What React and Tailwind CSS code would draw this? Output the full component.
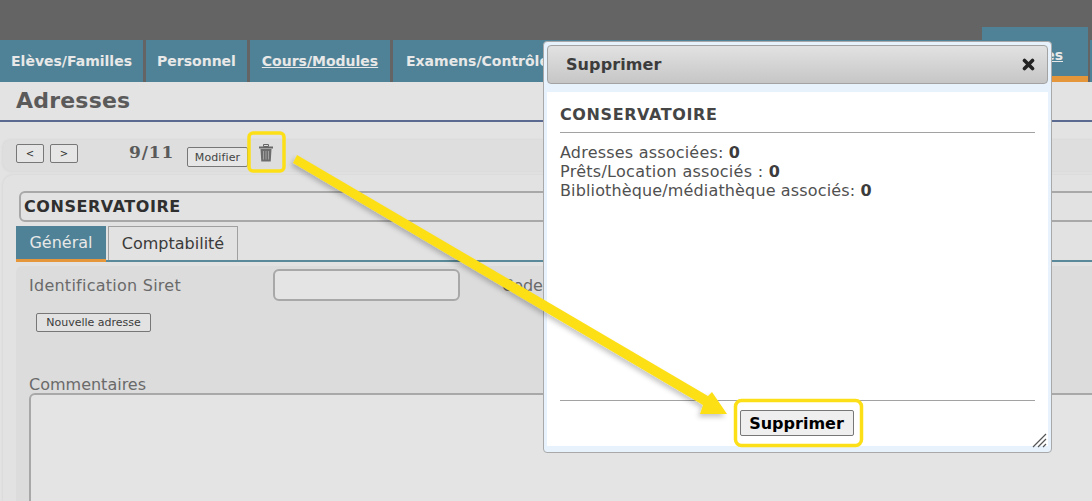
import React from "react";

const F = { fontFamily: '"DejaVu Sans", Verdana, sans-serif' };

function Tab({ children, w, u }) {
  return (
    <div className={`h-[42px] ${w} shrink-0 bg-[#4f8296] flex items-center justify-center text-[14px] font-bold text-[#e8e8e8] ${u ? "underline" : ""}`}>
      {children}
    </div>
  );
}

export default function App() {
  return (
    <div style={F} className="relative w-[1092px] h-[501px] overflow-hidden bg-[#e3e3e3] text-[#5f5f5f]">
      <div className="h-[40px] bg-[#636463]" />
      <div className="h-[42px] flex bg-[#636463] overflow-hidden">
        <Tab w="w-[143px] mr-[3px]">Elèves/Familles</Tab>
        <Tab w="w-[101px] mr-[3px]">Personnel</Tab>
        <Tab w="w-[140px] mr-[3px]" u>Cours/Modules</Tab>
        <div className="h-[42px] w-[170px] shrink-0 bg-[#4f8296] flex items-center pl-[13px] text-[14px] font-bold text-[#e8e8e8] whitespace-nowrap overflow-hidden">Examens/Contrôles</div>
        <div className="grow bg-[#4f8296]" />
      </div>
      <div className="h-[40px] border-b-2 border-[#5a6a90] pl-[16px] pt-[4px] text-[22px] leading-[30px] font-bold text-[#5a5a5a] tracking-[0.2px]">Adresses</div>
      <div className="ml-[3px] mt-[18px] h-[31px] rounded-l-[8px] bg-[#dedede] shadow-[0_0_3px_#cfcfcf] flex items-start pl-[13px] pt-[4px]">
        <button className="w-[28px] h-[19px] border border-[#777] rounded-[2px] bg-[#e6e6e6] text-[10px] leading-none text-[#333]">&lt;</button>
        <button className="ml-[6px] w-[28px] h-[19px] border border-[#777] rounded-[2px] bg-[#e6e6e6] text-[10px] leading-none text-[#333]">&gt;</button>
        <span className="ml-[51px] w-[45px] -mt-[2px] text-[17px] leading-[20px] font-bold text-[#5a5a5a] tracking-[0.9px] whitespace-nowrap" style={{ fontFamily: '"DejaVu Serif", serif' }}>9/11</span>
        <button className="ml-[13px] mt-[3px] w-[61px] h-[20px] border border-[#777] rounded-[2px] bg-[#e6e6e6] text-[11px] leading-none text-[#444] tracking-[0.1px]">Modifier</button>
        <svg className="ml-[10px]" width="16" height="18" viewBox="0 0 16 18">
          <path d="M5.5 0.5h5v2h-5z" fill="none" stroke="#666" />
          <rect x="1" y="2.5" width="14" height="2" fill="#666" />
          <path d="M2.5 5h11l-0.8 12.5h-9.4z" fill="#6c6c6c" />
          <path d="M5.5 7v8.5M8 7v8.5M10.5 7v8.5" stroke="#a0a0a0" strokeWidth="1" />
        </svg>
      </div>
      <div className="ml-[3px] mt-[4px] h-[326px] rounded-tl-[10px] bg-[#e2e2e2] shadow-[0_0_3px_#cfcfcf] pt-[16px] pl-[13px]">
        <div className="ml-[3px] w-[1200px] h-[31px] border-2 border-[#a8a8a8] rounded-[6px] flex items-center pl-[3px] pt-[1px] text-[16px] font-bold text-[#2f2f2f] tracking-[0.55px]">CONSERVATOIRE</div>
        <div className="mt-[4px] flex h-[36px] border-b-2 border-[#5a8a99]">
          <div className="w-[90px] h-[36px] bg-[#4f8296] border-b-[3px] border-[#e5963a] flex items-center justify-center text-[16px] text-[#e8e8e8]">Général</div>
          <div className="ml-[2px] w-[130px] h-[34px] border border-b-0 border-[#a0a0a0] flex items-center justify-center pt-[1px] text-[16px] text-[#3a3a3a]">Comptabilité</div>
        </div>
        <div className="mt-[4px] h-[300px] bg-[#dcdcdc] rounded-tl-[6px] pl-[13px] pt-[3px]">
          <div className="flex items-start">
            <span className="mt-[5px] w-[244px] text-[16px] leading-[24px] text-[#6a6a6a] tracking-[0.25px]">Identification Siret</span>
            <div className="w-[187px] h-[32px] border-2 border-[#a8a8a8] rounded-[6px] bg-[#e4e4e4]" />
            <span className="mt-[5px] ml-[42px] text-[16px] leading-[24px] text-[#6a6a6a]">Code</span>
          </div>
          <button className="ml-[7px] mt-[12px] block w-[115px] h-[19px] border border-[#777] rounded-[2px] bg-[#e2e2e2] text-[11px] leading-none text-[#3c3c3c]">Nouvelle adresse</button>
          <div className="mt-[44px] text-[16px] leading-[17px] text-[#6a6a6a]">Commentaires</div>
          <div className="w-[1200px] h-[120px] border-2 border-[#a8a8a8] rounded-[6px] bg-[#e4e4e4]" />
        </div>
      </div>

      {/* last tab, highest over the bar */}
      <div className="absolute left-[982px] top-[27px] w-[106px] h-[55px] bg-[#4f8296] border-b-[6px] border-[#e5963a] flex items-center justify-end pr-[25px] pt-[7px] text-[14px] font-bold text-[#e8e8e8] underline">es</div>
      <div className="absolute left-[1088px] top-[40px] w-[2px] h-[42px] bg-[#636463]" />

      {/* dialog */}
      <div className="absolute left-[543px] top-[41px] w-[509px] h-[412px] bg-[#e8f2fc] border border-[#a9a9a9] rounded-[4px] p-[3px] flex flex-col">
        <div className="h-[39px] shrink-0 rounded-[4px] border border-[#a3a3a3] bg-gradient-to-b from-[#e2e2e2] to-[#c6c6c6] flex items-center justify-between pl-[18px] pr-[12px]">
          <span className="text-[16px] font-bold text-[#3c3c3c] tracking-[0.1px]">Supprimer</span>
          <svg width="13" height="13" viewBox="0 0 13 13"><path d="M2.5 2.5l8 8M10.5 2.5l-8 8" stroke="#222" strokeWidth="3.6" strokeLinecap="round" /></svg>
        </div>
        <div className="mt-[8px] h-[354px] bg-white px-[13px] flex flex-col">
          <div className="h-[41px] border-b border-[#a2a2a2] pt-[13px] text-[16px] leading-[20px] font-bold text-[#454545] tracking-[0.6px]">CONSERVATOIRE</div>
          <div className="mt-[10px] text-[16px] leading-[19px] text-[#505050]">
            <div className="tracking-[0.2px]">Adresses associées: <b className="text-[#3c3c3c]">0</b></div>
            <div className="tracking-[0.28px]">Prêts/Location associés : <b className="text-[#3c3c3c]">0</b></div>
            <div className="tracking-[0.14px]">Bibliothèque/médiathèque associés: <b className="text-[#3c3c3c]">0</b></div>
          </div>
          <div className="mt-auto h-[46px] border-t border-[#a2a2a2] flex justify-center pt-[9px] pr-[2px]">
            <button className="w-[114px] h-[26px] border border-[#777] rounded-[2px] bg-[#efefef] pt-[2px] text-[16px] leading-none font-bold text-black">Supprimer</button>
          </div>
        </div>
        <svg className="absolute right-[4px] bottom-[4px]" width="15" height="15" viewBox="0 0 15 15">
          <path d="M1 14L14 1M6 14l8-8M11 14l3-3" stroke="#555" strokeWidth="1.2" />
        </svg>
      </div>

      {/* annotations */}
      <svg className="absolute inset-0 pointer-events-none" width="1092" height="501" viewBox="0 0 1092 501">
        <defs>
          <filter id="s" x="-10%" y="-10%" width="120%" height="120%">
            <feDropShadow dx="-2" dy="3" stdDeviation="2.5" floodColor="#000" floodOpacity="0.22" />
          </filter>
        </defs>
        <path d="M297 155L708 396L712 392L727 414L700 414L703 405L293 163Z" fill="#fddf17" filter="url(#s)" />
        <rect x="249" y="133" width="35" height="38" rx="4" fill="none" stroke="#fddf17" strokeWidth="3.5" />
        <rect x="735.5" y="400.5" width="126" height="45" rx="6" fill="none" stroke="#fddf17" strokeWidth="3.5" />
      </svg>
    </div>
  );
}
